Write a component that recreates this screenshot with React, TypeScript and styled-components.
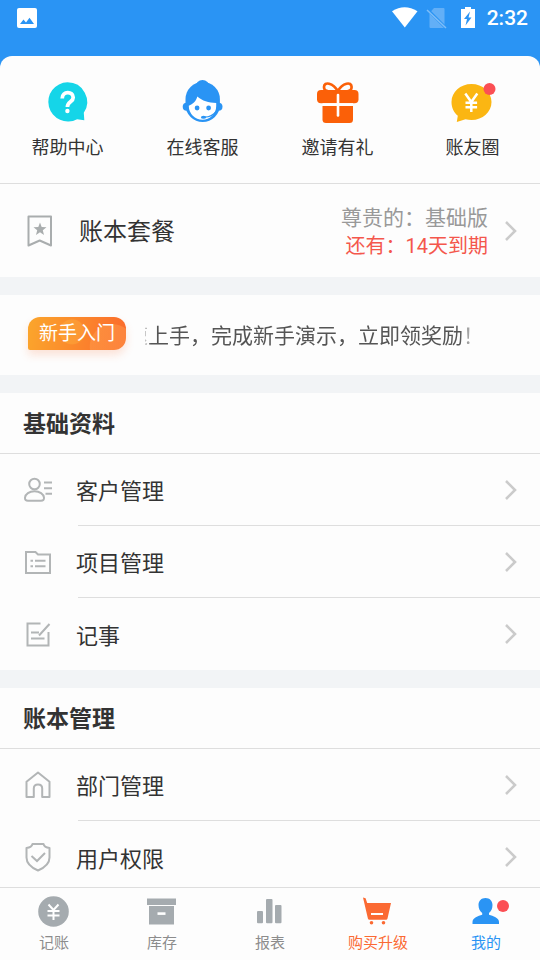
import React from 'react';
import styled, { createGlobalStyle } from 'styled-components';

const GlobalStyle = createGlobalStyle`
  * { box-sizing: border-box; }
  body {
    margin: 0;
    background: #2a94f4;
    color: #333;
    font-family: Roboto, 'Noto Sans CJK SC', sans-serif;
  }
  button { border: 0; padding: 0; background: none; color: inherit; font: inherit; cursor: pointer; }
  a { color: inherit; text-decoration: none; }
  svg { display: block; flex: none; overflow: visible; }
`;

const Screen = styled.div`
  height: 100vh;
  display: flex;
  flex-direction: column;
  background: #2a94f4;
`;

const StatusBar = styled.header`
  flex: none;
  height: 56px;
  padding: 0 12px 20px 16px;
  display: flex;
  align-items: center;
  justify-content: space-between;
  color: #fff;
`;

const StatusGroup = styled.div`
  display: flex;
  align-items: center;
  gap: 10px;
`;

const Clock = styled.time`
  font-size: 21px;
  line-height: 24px;
  font-weight: 500;
`;

const Content = styled.main`
  flex: 1;
  min-height: 0;
  overflow-y: auto;
  scrollbar-width: none;
  border-radius: 12px 12px 0 0;
  background: #f2f4f6;
`;

const QuickGrid = styled.nav`
  display: grid;
  grid-template-columns: repeat(4, 1fr);
  padding: 22px 0 21px;
  background: #fdfdfd;
  border-bottom: 1px solid #dedede;
`;

const QuickItem = styled.button`
  display: flex;
  flex-direction: column;
  align-items: center;
  gap: 8px;
  font-size: 18px;
  line-height: 28px;
`;

const PlanRow = styled.button`
  width: 100%;
  min-height: 93px;
  padding: 0 22px 0 24px;
  display: flex;
  align-items: center;
  background: #fdfdfd;
  text-align: left;
`;

const PlanName = styled.span`
  flex: 1;
  margin: 3px 0 0 23px;
  font-size: 24px;
  line-height: 36px;
`;

const PlanStatus = styled.span`
  margin: 2px 16px 0 0;
  display: flex;
  flex-direction: column;
  text-align: right;
  font-size: 21px;
  line-height: 28px;
  color: #999;
`;

const Expiry = styled.span`
  font-size: 20px;
  color: #f4574c;
`;

const GuideRow = styled.a`
  margin: 18px 0;
  height: 80px;
  padding: 0 56px 0 28px;
  display: flex;
  align-items: center;
  gap: 19px;
  background: #fdfdfd;
`;

const GuideTag = styled.span`
  flex: none;
  width: 98px;
  height: 33px;
  margin-bottom: 4px;
  border-radius: 12px 12px 12px 2px;
  background:
    radial-gradient(circle at 45% 45%, rgba(255, 190, 70, 0.3) 0 12px, transparent 13px),
    radial-gradient(circle at 86% 90%, rgba(255, 160, 80, 0.45) 0 22px, transparent 23px),
    linear-gradient(100deg, #fba62c, #fb6a2c);
  box-shadow: 0 5px 8px rgba(251, 106, 44, 0.18);
  color: #fff;
  font-size: 19px;
  line-height: 34px;
  text-align: center;
`;

const Ticker = styled.span`
  flex: 1;
  min-width: 0;
  margin-top: 2px;
  display: flex;
  justify-content: flex-end;
  overflow: hidden;
  white-space: nowrap;
  font-size: 21px;
  line-height: 32px;
  color: #555;
  mask-image: linear-gradient(90deg, rgba(0, 0, 0, 0.3), #000 6px, #000 calc(100% - 24px), transparent calc(100% - 6px));
`;

const Section = styled.section`
  background: #fdfdfd;
  margin-bottom: 18px;
`;

const SectionTitle = styled.h2`
  margin: 0;
  padding: 14px 23px 10px;
  border-bottom: 1px solid #dedede;
  font-size: 23px;
  line-height: 36px;
  font-weight: 700;
`;

const MenuList = styled.ul`
  margin: 0;
  padding: 0;
  list-style: none;
`;

const MenuItem = styled.li`
  &:not(:last-child)::after {
    content: '';
    display: block;
    height: 1px;
    margin-left: 78px;
    background: #dedede;
  }
`;

const MenuLink = styled.a<{ $last: boolean }>`
  height: ${(p) => (p.$last ? 72 : 71)}px;
  padding: 0 22px;
  display: flex;
  align-items: center;
`;

const MenuLabel = styled.span`
  flex: 1;
  margin: 5px 0 0 22px;
  font-size: 22px;
  line-height: 32px;
`;

const TabBar = styled.nav`
  flex: none;
  display: grid;
  grid-template-columns: repeat(5, 1fr);
  padding: 5px 0;
  background: #fdfdfd;
  border-top: 1px solid #dedede;
`;

const Tab = styled.button<{ $color: string }>`
  display: flex;
  flex-direction: column;
  align-items: center;
  gap: 3px;
  color: ${(p) => p.$color};
  font-size: 15px;
  line-height: 23px;
`;

const Chevron = () => (
  <svg width="14" height="24" viewBox="0 0 14 24" fill="none" stroke="#cbcbcb" strokeWidth="2.6">
    <path d="M2 3l9 9-9 9" />
  </svg>
);

const QuickSvg = ({ children }: { children: React.ReactNode }) => (
  <svg width="48" height="48" viewBox="0 0 48 48">{children}</svg>
);

const HelpIcon = () => (
  <QuickSvg>
    <path d="M23.5 4.3a19.6 19.6 0 0 1 16.3 30.5l.5 7.4-7.2-1A19.6 19.6 0 1 1 23.5 4.3z" fill="#15d5e8" />
    <path d="M18.2 20.4c0-7.6 11-7.3 11-1 0 4.6-5.8 4.1-5.8 9.6" fill="none" stroke="#fff" strokeWidth="3.8" />
    <circle cx="23.4" cy="33" r="2.2" fill="#fff" />
  </QuickSvg>
);

const ServiceIcon = () => (
  <QuickSvg>
    <g fill="#2a94f4">
      <circle cx="23.5" cy="9" r="7" />
      <circle cx="7.7" cy="28.8" r="4" />
      <circle cx="39.5" cy="28.8" r="4" />
      <path d="M6.5 27V21a17.2 17 0 0 1 34.4 0v6a17.2 17 0 0 1-34.4 0z" />
    </g>
    <path d="M9.8 27.8c4-1.6 7.6-5 8.5-9.3 5 4.3 11.2 6.3 18.9 6.4v3.1a13.7 13.7 0 0 1-27.4 0z" fill="#fff" />
    <circle cx="18.1" cy="30" r="2.4" fill="#2a94f4" />
    <circle cx="29.6" cy="30" r="2.4" fill="#2a94f4" />
    <ellipse cx="24.5" cy="39.2" rx="2.6" ry="1.5" fill="#2a94f4" />
    <path d="M25 39.2c5 .2 9-1.5 12.5-6" fill="none" stroke="#2a94f4" strokeWidth="1.3" />
  </QuickSvg>
);

const GiftIcon = () => (
  <QuickSvg>
    <path d="M23.8 13C19 5 10 3 10 9c0 2.500 1.500 4 4 4M23.800 13c4.800-8 13.800-10 13.800-4 0 2.500-1.500 4-4 4" fill="none" stroke="#fb6008" strokeWidth="2.7" />
    <rect x="3" y="12" width="41.5" height="13.2" rx="4" fill="#fb6008" />
    <path d="M8.500 28h30.500v13.500q0 3.500-3.500 3.500h-23.500q-3.500 0-3.500-3.500z" fill="#fb6008" />
    <path d="M8.500 26.600h30.500" stroke="#fff" strokeWidth="2.8" />
    <path d="M24 17v20.500" stroke="#fff" strokeWidth="2.6" strokeLinecap="round" />
  </QuickSvg>
);

const CircleIcon = () => (
  <QuickSvg>
    <path d="M22.5 6c11.2 0 20 8 20 18s-8.8 18-20 18q-3 0-6-.8L7.800 44l1-6.300C4.800 34.400 2.500 29.600 2.500 24c0-10 8.800-18 20-18z" fill="#fbb612" />
    <path d="M16.3 15.5l6 8.500 6-8.500M22.300 24v10M16.500 24.800h11.600M16.500 29.300h11.600" fill="none" stroke="#fff" strokeWidth="2.5" />
    <circle cx="40.5" cy="11" r="6" fill="#fb4f54" />
  </QuickSvg>
);

const LineSvg = ({ children }: { children: React.ReactNode }) => (
  <svg width="32" height="32" viewBox="0 0 32 32" fill="none" stroke="#b2b5b6" strokeWidth="2">{children}</svg>
);

const PlanIcon = () => (
  <svg width="32" height="32" viewBox="0 0 32 32" fill="none" stroke="#a9adae" strokeWidth="2">
    <path d="M4.500 1.500h22.500v29l-11.300-5-11.200 5z" strokeLinejoin="round" />
    <path d="M16 7.500l1.700 4.500 4.800.2-3.700 3 1.200 4.700-4-2.700-4 2.700 1.200-4.700-3.700-3 4.800-.2z" fill="#a9adae" stroke="none" />
  </svg>
);

const CustomerIcon = () => (
  <LineSvg>
    <circle cx="12.5" cy="10" r="5.3" />
    <path d="M6 26.700q-3.200 0-3-3c.3-3.700 4.300-6.400 9.500-6.400s9.200 2.700 9.500 6.400q.2 3-3 3z" />
    <path d="M22 8.500h8M22 14.200h8M23.500 19.700h6.500" />
  </LineSvg>
);

const ProjectIcon = () => (
  <LineSvg>
    <path d="M4 6h9.500l2.500 2.500h12v18.500H4z" />
    <path d="M8.500 14.700h2.500M13 14.700h10.500M8.500 20.300h2.500M13 20.300h10.500" />
  </LineSvg>
);

const NoteIcon = () => (
  <LineSvg>
    <path d="M18.500 5.500H5.500v22h21V14M27.500 6L17 17.500M9 14.500h8M9 20.500h13.500" />
  </LineSvg>
);

const HomeIcon = () => (
  <LineSvg>
    <path d="M4.500 12.800L16 3.500l11.500 9.300V28H20.200V19.500q0-4-4.200-4t-4.200 4V28H4.500z" strokeLinejoin="round" />
  </LineSvg>
);

const ShieldIcon = () => (
  <LineSvg>
    <path d="M10.500 3h11q.8 3.500 6 4v9.500c0 6-4.500 10-11.500 13C9 26.500 4.500 22.500 4.500 16.500V7q5.200-.5 6-4z" strokeLinejoin="round" />
    <path d="M9.500 15l5.500 5 8-8" />
  </LineSvg>
);

const TabSvg = ({ children }: { children: React.ReactNode }) => (
  <svg width="36" height="36" viewBox="0 0 36 36" fill="currentColor">{children}</svg>
);

const GREY = '#a5abaf';

const LedgerIcon = () => (
  <TabSvg>
    <circle cx="17.5" cy="18.5" r="15.3" fill={GREY} />
    <path d="M12.500 11.500l5 5.500 5-5.500M17.500 17v10M11.500 18h12M11.500 22.500h12" fill="none" stroke="#fff" strokeWidth="2" />
  </TabSvg>
);

const StockIcon = () => (
  <TabSvg>
    <path d="M3 5.500h29v6.500H3zM5 13h25v18.500H5z" fill={GREY} />
    <rect x="13.5" y="19.3" width="8" height="2.6" fill="#fff" />
  </TabSvg>
);

const ReportIcon = () => (
  <TabSvg>
    <g fill={GREY}>
      <rect x="5" y="18" width="6" height="12.3" rx="1" />
      <rect x="14" y="6" width="6.5" height="24.3" rx="1" />
      <rect x="23" y="12" width="6.5" height="18.3" rx="1" />
    </g>
  </TabSvg>
);

const CartIcon = () => (
  <TabSvg>
    <path d="M3 4.500l2.600.7 1.600 4.800h23.800L27.500 25.500q-.3 1.300-1.500 1.300H9.500q-1.300 0-1.600-1.300z" />
    <rect x="11" y="20" width="12" height="2" fill="#fff" />
    <circle cx="11.5" cy="29.7" r="1.8" />
    <circle cx="23.5" cy="29.7" r="1.8" />
  </TabSvg>
);

const ProfileIcon = () => (
  <TabSvg>
    <path d="M17.500 5c4.200 0 7 2.800 7 7 0 3.500-1.300 6.300-3.500 8v1.700c4 1.300 10 3 10 7.300v2H4.500v-2c0-4.300 5.700-6 9.700-7.300V20c-2.300-1.700-3.700-4.500-3.700-8 0-4.200 2.800-7 7-7z" />
    <circle cx="35" cy="13" r="6" fill="#fb4f54" />
  </TabSvg>
);

const quickItems = [
  { label: '帮助中心', Icon: HelpIcon },
  { label: '在线客服', Icon: ServiceIcon },
  { label: '邀请有礼', Icon: GiftIcon },
  { label: '账友圈', Icon: CircleIcon },
];

const sections = [
  {
    title: '基础资料',
    items: [
      { label: '客户管理', Icon: CustomerIcon },
      { label: '项目管理', Icon: ProjectIcon },
      { label: '记事', Icon: NoteIcon },
    ],
  },
  {
    title: '账本管理',
    items: [
      { label: '部门管理', Icon: HomeIcon },
      { label: '用户权限', Icon: ShieldIcon },
    ],
  },
];

const tabs = [
  { label: '记账', color: '#8c8c8c', Icon: LedgerIcon },
  { label: '库存', color: '#8c8c8c', Icon: StockIcon },
  { label: '报表', color: '#8c8c8c', Icon: ReportIcon },
  { label: '购买升级', color: '#fb6a33', Icon: CartIcon },
  { label: '我的', color: '#2a94f4', Icon: ProfileIcon },
];

export default function App() {
  return (
    <Screen>
      <GlobalStyle />
      <StatusBar>
        <svg width="22" height="22" viewBox="0 0 22 22">
          <rect x="1" y="1" width="20" height="20" rx="2" fill="#fff" />
          <path d="M4 17l3.500-4.500 2.500 3 3.500-4.700L18 17z" fill="#2a94f4" />
        </svg>
        <StatusGroup>
          <svg width="26" height="22" viewBox="0 0 26 22" fill="#fff">
            <path d="M1 4.300Q13.500-3.600 26.500 4.300L13.800 20.500z" />
          </svg>
          <svg width="20" height="22" viewBox="0 0 20 22">
            <path d="M7 1h9.500q1 0 1 1v18q0 1-1 1h-13q-1 0-1-1V6z" fill="#62aff7" />
            <path d="M1 3l18 18" stroke="#2a94f4" strokeWidth="3" />
            <path d="M0 3l19 18" stroke="#7fbef8" strokeWidth="1.5" />
          </svg>
          <svg width="20" height="22" viewBox="0 0 20 22">
            <path d="M8 0h6v2h4v19H4V2h4z" fill="#fff" />
            <path d="M13 4.500l-6 7.500h3l-1.500 6.500 6-8h-3z" fill="#2a94f4" />
          </svg>
          <Clock>2:32</Clock>
        </StatusGroup>
      </StatusBar>

      <Content>
        <QuickGrid>
          {quickItems.map(({ label, Icon }) => (
            <QuickItem key={label} type="button">
              <Icon />
              {label}
            </QuickItem>
          ))}
        </QuickGrid>

        <PlanRow type="button">
          <PlanIcon />
          <PlanName>账本套餐</PlanName>
          <PlanStatus>
            尊贵的：基础版
            <Expiry>还有：14天到期</Expiry>
          </PlanStatus>
          <Chevron />
        </PlanRow>

        <GuideRow href="#guide">
          <GuideTag>新手入门</GuideTag>
          <Ticker>速上手，完成新手演示，立即领奖励！</Ticker>
        </GuideRow>

        {sections.map((section) => (
          <Section key={section.title}>
            <SectionTitle>{section.title}</SectionTitle>
            <MenuList>
              {section.items.map(({ label, Icon }, i) => (
                <MenuItem key={label}>
                  <MenuLink href="#menu" $last={i === section.items.length - 1}>
                    <Icon />
                    <MenuLabel>{label}</MenuLabel>
                    <Chevron />
                  </MenuLink>
                </MenuItem>
              ))}
            </MenuList>
          </Section>
        ))}
      </Content>

      <TabBar>
        {tabs.map(({ label, color, Icon }) => (
          <Tab key={label} type="button" $color={color}>
            <Icon />
            {label}
          </Tab>
        ))}
      </TabBar>
    </Screen>
  );
}
